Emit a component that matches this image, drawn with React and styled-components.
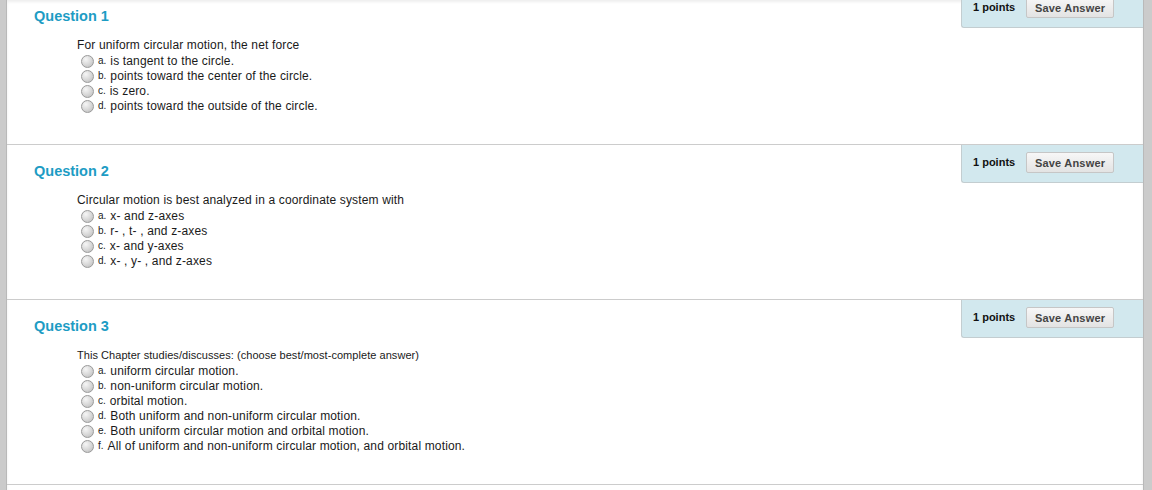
import styled, { createGlobalStyle } from "styled-components";

const GlobalStyle = createGlobalStyle`
  html, body {
    margin: 0;
    padding: 0;
    background: #c9c9c9;
    font-family: "Liberation Sans", Arial, sans-serif;
  }
`;

const questions = [
  {
    title: "Question 1",
    text: "For uniform circular motion, the net force",
    small: false,
    options: [
      "is tangent to the circle.",
      "points toward the center of the circle.",
      "is zero.",
      "points toward the outside of the circle.",
    ],
  },
  {
    title: "Question 2",
    text: "Circular motion is best analyzed in a coordinate system with",
    small: false,
    options: ["x- and z-axes", "r- , t- , and z-axes", "x- and y-axes", "x- , y- , and z-axes"],
  },
  {
    title: "Question 3",
    text: "This Chapter studies/discusses: (choose best/most-complete answer)",
    small: true,
    options: [
      "uniform circular motion.",
      "non-uniform circular motion.",
      "orbital motion.",
      "Both uniform and non-uniform circular motion.",
      "Both uniform circular motion and orbital motion.",
      "All of uniform and non-uniform circular motion, and orbital motion.",
    ],
  },
];

const Frame = styled.div`
  height: 490px;
  overflow: hidden;
  display: flex;
`;

const Rail = styled.div`
  flex: 0 0 ${({ w }) => w}px;
  background: #cbcbcb;
  border-${({ side }) => side}: 1px solid #b9b9b9;
  box-sizing: border-box;
`;

const Content = styled.div`
  flex: 1;
  background: #fff;
  box-shadow: inset 0 2px 3px rgba(0, 0, 0, 0.07);
`;

const List = styled.div`
  margin-top: -10px;
`;

const Block = styled.div`
  border-bottom: 1px solid #cccccc;
  padding-bottom: 31px;
`;

const Header = styled.div`
  display: flex;
  justify-content: space-between;
  align-items: flex-start;
  height: 38px;
`;

const Title = styled.h3`
  margin: 0;
  padding: 18px 0 0 27px;
  font-size: 14.5px;
  line-height: 17px;
  font-weight: bold;
  color: #1d9cc4;
`;

const PointsBox = styled.div`
  box-sizing: border-box;
  width: 182px;
  height: 38px;
  padding: 7px 29px 0 11px;
  display: flex;
  align-items: flex-start;
  gap: 11px;
  background: #d2e8ee;
  border-left: 1px solid #c3cdd0;
  border-bottom: 1px solid #c3cdd0;
  border-bottom-left-radius: 3px;
`;

const Points = styled.span`
  font-size: 11px;
  font-weight: bold;
  color: #111;
  line-height: 21px;
  white-space: nowrap;
`;

const SaveButton = styled.button`
  width: 88px;
  height: 21px;
  padding: 0;
  font-family: "Liberation Sans", Arial, sans-serif;
  font-size: 11px;
  font-weight: bold;
  letter-spacing: 0.2px;
  color: #444;
  background: linear-gradient(#f7f7f7, #e3e3e3);
  border: 1px solid #c6c6c6;
  border-radius: 2px;
`;

const Body = styled.div`
  margin-top: 10px;
  padding-left: 70px;
  color: #1a1a1a;
`;

const Prompt = styled.div`
  font-size: ${({ small }) => (small ? "11px" : "12px")};
  letter-spacing: ${({ small }) => (small ? "0.05px" : "0.15px")};
  line-height: 15px;
`;

const Option = styled.label`
  display: flex;
  align-items: center;
  height: 15px;
  padding-left: 4px;
  font-size: 12px;
  letter-spacing: 0.15px;
  white-space: nowrap;
`;

const Radio = styled.input.attrs({ type: "radio" })`
  appearance: none;
  width: 13px;
  height: 13px;
  margin: 1px 4px 0 0;
  border-radius: 50%;
  border: 1px solid #9a9a9a;
  box-sizing: border-box;
  background: radial-gradient(circle at 35% 30%, #f6f6f6 0%, #d9d9d9 50%, #b9b9b9 100%);
`;

const Letter = styled.span`
  font-size: 10px;
  letter-spacing: 0;
  margin-right: 4px;
`;

export default function App() {
  return (
    <>
      <GlobalStyle />
      <Frame>
        <Rail w={7} side="right" />
        <Content>
          <List>
            {questions.map((q, qi) => (
              <Block key={qi}>
                <Header>
                  <Title>{q.title}</Title>
                  <PointsBox>
                    <Points>1 points</Points>
                    <SaveButton>Save Answer</SaveButton>
                  </PointsBox>
                </Header>
                <Body>
                  <Prompt small={q.small}>{q.text}</Prompt>
                  {q.options.map((o, i) => (
                    <Option key={i}>
                      <Radio name={`q${qi}`} />
                      <Letter>{"abcdef"[i]}.</Letter>
                      {o}
                    </Option>
                  ))}
                </Body>
              </Block>
            ))}
          </List>
        </Content>
        <Rail w={9} side="left" />
      </Frame>
    </>
  );
}
